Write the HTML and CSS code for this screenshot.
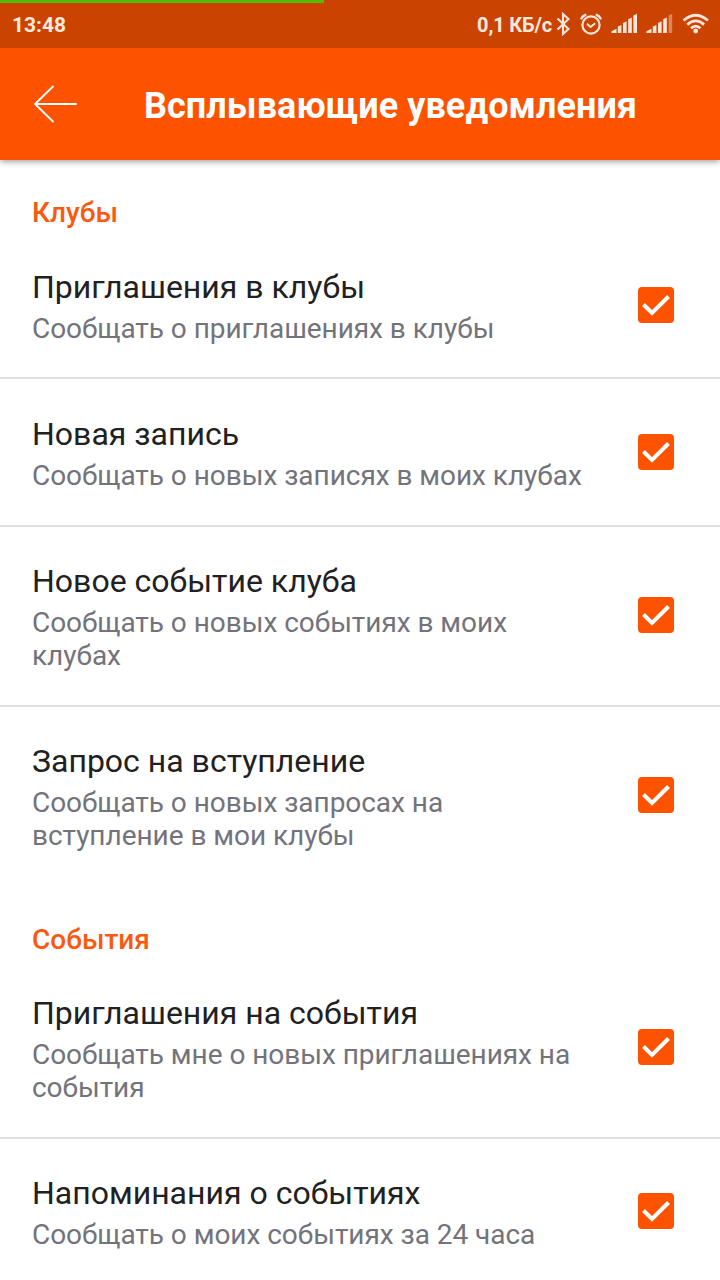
FILE: index.html
```html
<!DOCTYPE html>
<html lang="ru">
<head>
<meta charset="utf-8">
<title>Всплывающие уведомления</title>
<link rel="stylesheet" href="styles.css">
</head>
<body>
<svg class="defs" aria-hidden="true">
  <symbol id="check" viewBox="0 0 36 36">
    <rect width="36" height="36" rx="4" fill="#fd5300"/>
    <path d="M5.5 17.5 L14 26 L30.5 9.5" fill="none" stroke="#fff" stroke-width="4"/>
  </symbol>
</svg>
<div class="screen">
  <div class="progress"></div>
  <div class="status">
    <span class="clock">13:48</span>
    <span class="speed">0,1 КБ/с</span>
    <svg class="status-icons" width="168" height="48" viewBox="552 0 168 48" fill="none" stroke="#ffe6da">
      <path d="M557.5 18.5 L568.5 29 L563 34 V14 L568.5 19 L557.5 29.5" stroke-width="2.1"/>
      <circle cx="591" cy="25" r="8.6" stroke-width="2.2"/>
      <path d="M587 23.8 L590.6 27 L595.2 23.3" stroke-width="2"/>
      <path d="M581 19.3 Q582.5 15.5 586.3 14.6 M595.7 14.6 Q599.5 15.5 601 19.3" stroke-width="2.2"/>
      <g fill="#ffe6da" stroke="none">
        <path d="M611.5 33 V31.2 L616.5 28.8 V33 Z M617.8 33 V26.6 L621.4 25 V33 Z M623 33 V23 L626.6 21.3 V33 Z M628.2 33 V19.3 L631.8 17.5 V33 Z M633.4 33 V15.5 L637 13.8 V33 Z"/>
        <path d="M646.5 33 V31.2 L651.5 28.8 V33 Z M652.8 33 V26.6 L656.4 25 V33 Z M658 33 V23 L661.6 21.3 V33 Z M663.2 33 V19.3 L666.8 17.5 V33 Z"/>
        <path d="M668.6 33 V15.5 L672.2 13.8 V33 Z" opacity=".4"/>
        <circle cx="695.7" cy="31" r="2.4"/>
      </g>
      <path d="M683.5 20.5 Q695.7 10 708 20.5 M687.3 24.6 Q695.7 17.2 704.1 24.6 M691 28.2 Q695.7 24 700.4 28.2" stroke-width="2.8"/>
    </svg>
  </div>
  <header class="toolbar">
    <svg class="back" width="44" height="40" viewBox="0 0 44 40" fill="none" stroke="#fff" stroke-width="1.8" stroke-linecap="round" stroke-linejoin="round">
      <path d="M20 2.5 L2 20 L20 37.5 M2 20 H43"/>
    </svg>
    <h1 class="heading">Всплывающие уведомления</h1>
  </header>
  <main>
    <h2 class="section">Клубы</h2>
    <div class="row">
      <div class="text"><div class="title">Приглашения в клубы</div><div class="desc">Сообщать о приглашениях в клубы</div></div>
      <svg class="box"><use href="#check"/></svg>
    </div>
    <div class="row row-tall">
      <div class="text"><div class="title">Новая запись</div><div class="desc">Сообщать о новых записях в моих клубах</div></div>
      <svg class="box"><use href="#check"/></svg>
    </div>
    <div class="row row-raised">
      <div class="text"><div class="title">Новое событие клуба</div><div class="desc">Сообщать о новых событиях в моих<br>клубах</div></div>
      <svg class="box"><use href="#check"/></svg>
    </div>
    <div class="row row-raised row-last">
      <div class="text"><div class="title">Запрос на вступление</div><div class="desc">Сообщать о новых запросах на<br>вступление в мои клубы</div></div>
      <svg class="box"><use href="#check"/></svg>
    </div>
    <h2 class="section">События</h2>
    <div class="row row-raised">
      <div class="text"><div class="title">Приглашения на события</div><div class="desc">Сообщать мне о новых приглашениях на<br>события</div></div>
      <svg class="box"><use href="#check"/></svg>
    </div>
    <div class="row row-raised">
      <div class="text"><div class="title">Напоминания о событиях</div><div class="desc">Сообщать о моих событиях за 24 часа</div></div>
      <svg class="box"><use href="#check"/></svg>
    </div>
  </main>
</div>
</body>
</html>
```
FILE: styles.css
```css
* { box-sizing: border-box; }
body { margin: 0; background: #fff; font-family: Roboto, "Liberation Sans", sans-serif; }
.defs { position: absolute; width: 0; height: 0; }
.screen { position: relative; width: 720px; height: 1280px; overflow: hidden; }
.progress { position: absolute; z-index: 2; top: 0; left: 0; width: 324px; height: 3px; background: #55bb08; }
.status { position: relative; z-index: 1; display: flex; align-items: center; height: 48px; padding-left: 12px; background: #ca4300; color: #ffe9df; font-weight: 700; font-size: 21px; white-space: nowrap; }
.clock { flex: 1; padding-top: 2px; }
.speed { padding-top: 2px; font-size: 20px; letter-spacing: -.15px; }
.status-icons { flex: none; display: block; }
.toolbar { display: flex; align-items: center; height: 112px; padding-left: 33px; background: #fd5300; box-shadow: 0 1px 7px rgba(0, 0, 0, .45); }
.back { flex: none; margin-right: 67px; }
.heading { margin: 0; padding-top: 4px; font-size: 36px; line-height: 42px; font-weight: 700; letter-spacing: .07px; color: #fff; white-space: nowrap; }
.section { height: 72px; margin: 0; padding: 36px 32px 0; font-size: 28px; line-height: 33px; font-weight: 500; color: #fa5a0f; }
.row { display: flex; justify-content: space-between; align-items: center; padding: 34px 46px 34px 32px; border-bottom: 2px solid #e1e1e1; }
.row-tall { padding-bottom: 35px; }
.row-raised { padding-top: 33px; padding-bottom: 35px; }
.row-last { border-bottom-color: transparent; }
.text { padding-top: 2px; margin-bottom: -2px; white-space: nowrap; }
.title { font-size: 32px; line-height: 38px; margin-bottom: 6px; color: #212121; }
.desc { font-size: 28px; line-height: 33px; letter-spacing: -.04px; color: #73737b; }
.box { flex: none; width: 36px; height: 36px; }
```
